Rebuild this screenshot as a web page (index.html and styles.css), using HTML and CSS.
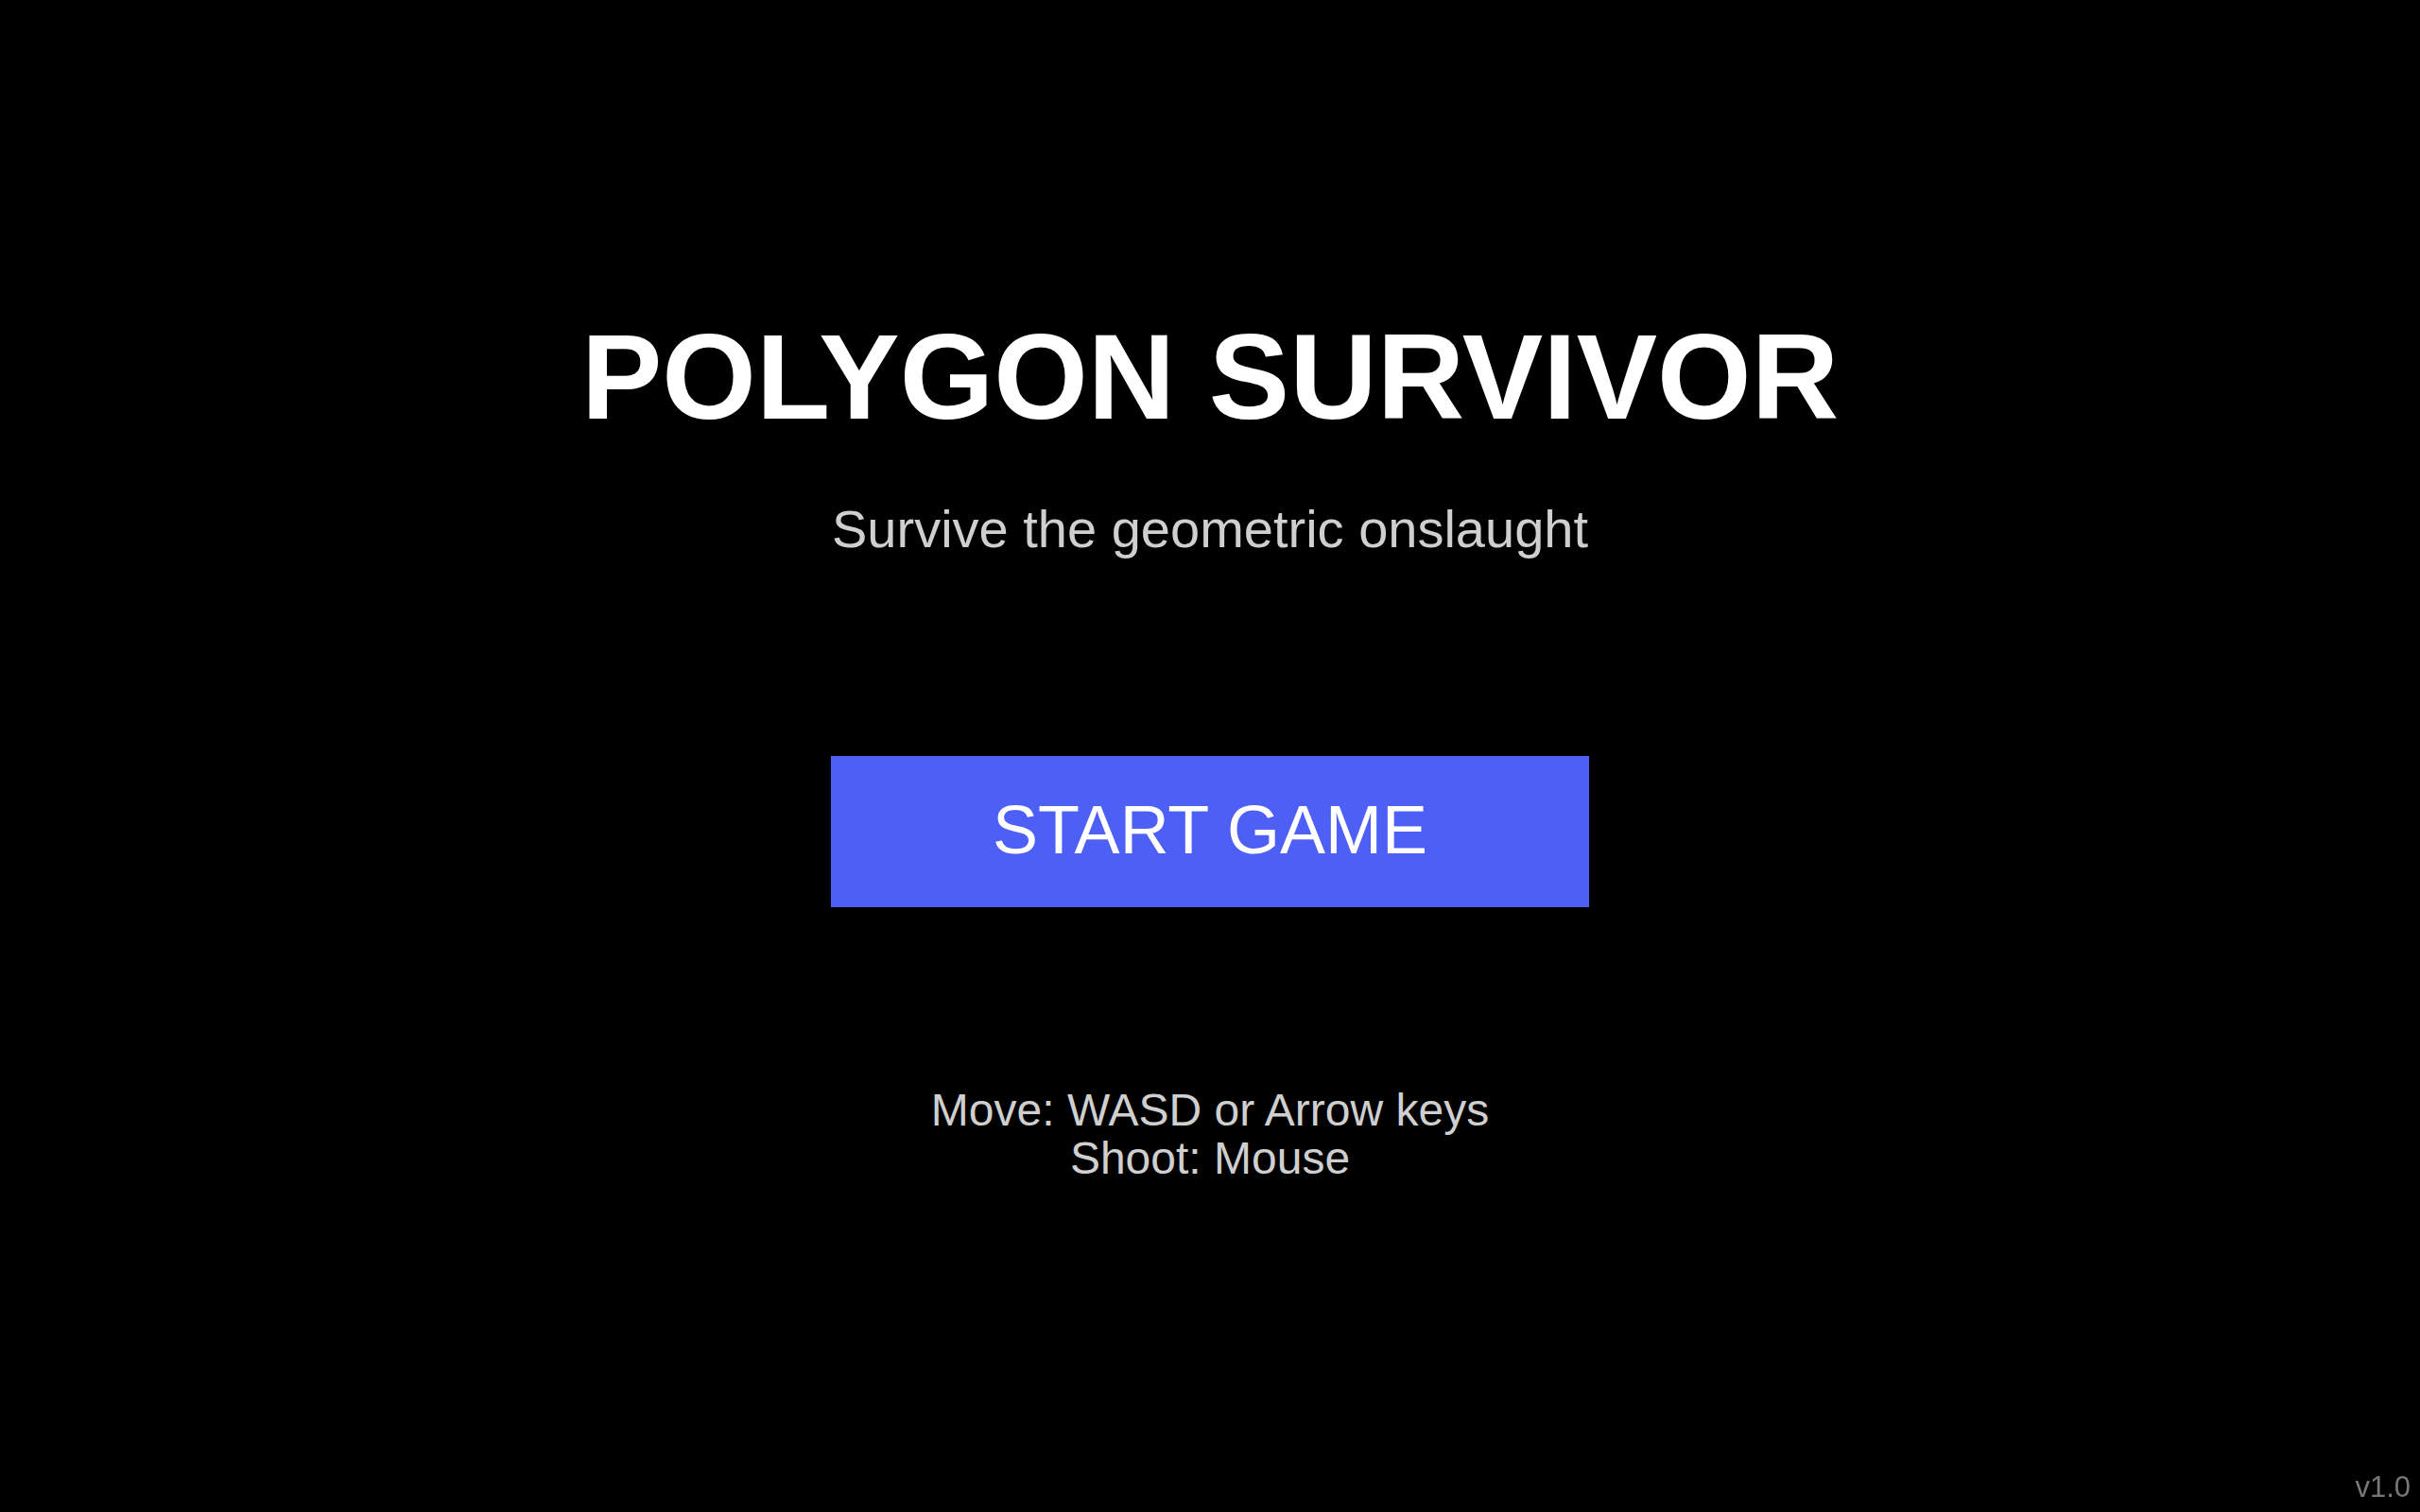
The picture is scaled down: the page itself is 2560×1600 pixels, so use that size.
FILE: index.html
```html
<!DOCTYPE html>
<html lang="en">
<head>
<meta charset="utf-8">
<title>Polygon Survivor</title>
<link rel="stylesheet" href="styles.css">
</head>
<body>
<main class="menu">
  <h1 class="title">POLYGON SURVIVOR</h1>
  <p class="subtitle">Survive the geometric onslaught</p>
  <button class="start-btn" type="button">START GAME</button>
  <p class="instructions">Move: WASD or Arrow keys<br>Shoot: Mouse</p>
</main>
<div class="version">v1.0</div>
</body>
</html>
```

FILE: styles.css
```css
html, body {
  margin: 0;
  padding: 0;
  background: #000;
  width: 100%;
  height: 100%;
  overflow: hidden;
}

body {
  font-family: "Liberation Sans", Arial, sans-serif;
  color: #fff;
}

.menu {
  display: flex;
  flex-direction: column;
  align-items: center;
  padding-top: 325px;
  box-sizing: border-box;
  height: 100%;
}

.title {
  margin: 0;
  font-size: 128px;
  font-weight: 700;
  color: #fff;
  line-height: normal;
}

.subtitle {
  margin: 55px 0 0;
  font-size: 56px;
  color: #cfcfcf;
  line-height: normal;
}

.start-btn {
  margin-top: 208px;
  font-family: "Liberation Sans", Arial, sans-serif;
  font-size: 72px;
  line-height: normal;
  color: #fff;
  background: #4e5ff5;
  border: none;
  border-radius: 0;
  padding: 37px 171px 41px;
  cursor: pointer;
}

.instructions {
  margin: 189px 0 0;
  font-size: 48px;
  line-height: 51px;
  color: #cfcfcf;
  text-align: center;
}

.version {
  position: fixed;
  right: 10px;
  bottom: 8px;
  font-size: 31px;
  color: #777;
}
```
